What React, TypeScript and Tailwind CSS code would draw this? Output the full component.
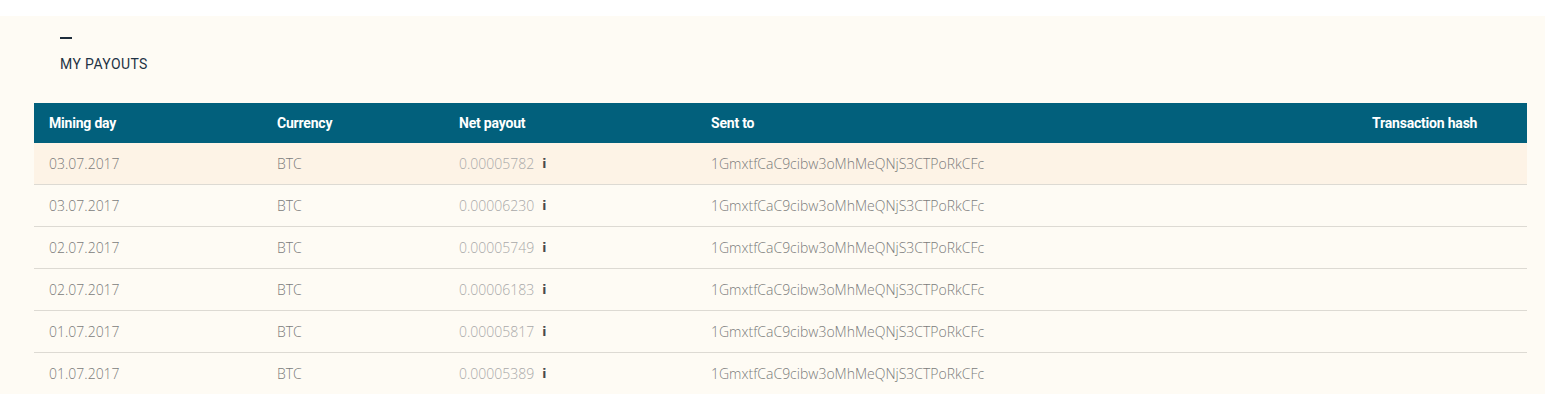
import React from "react";

interface Payout {
  day: string;
  currency: string;
  amount: string;
  address: string;
}

const payouts: Payout[] = [
  { day: "03.07.2017", currency: "BTC", amount: "0.00005782", address: "1GmxtfCaC9cibw3oMhMeQNjS3CTPoRkCFc" },
  { day: "03.07.2017", currency: "BTC", amount: "0.00006230", address: "1GmxtfCaC9cibw3oMhMeQNjS3CTPoRkCFc" },
  { day: "02.07.2017", currency: "BTC", amount: "0.00005749", address: "1GmxtfCaC9cibw3oMhMeQNjS3CTPoRkCFc" },
  { day: "02.07.2017", currency: "BTC", amount: "0.00006183", address: "1GmxtfCaC9cibw3oMhMeQNjS3CTPoRkCFc" },
  { day: "01.07.2017", currency: "BTC", amount: "0.00005817", address: "1GmxtfCaC9cibw3oMhMeQNjS3CTPoRkCFc" },
  { day: "01.07.2017", currency: "BTC", amount: "0.00005389", address: "1GmxtfCaC9cibw3oMhMeQNjS3CTPoRkCFc" },
];

const cols = "grid grid-cols-[228px_182px_252px_1fr_155px]";

const App: React.FC = () => {
  return (
    <div className="bg-white pt-4 min-h-[394px]">
      <div className="bg-[#fefbf4] pl-[34px] pr-[18px] pt-[21px]">
        <div className="pl-[26px]">
          <div className="w-3 h-[2px] bg-[#1e2d3b]" />
          <h2 className="mt-[17px] text-[14px] leading-4 text-[#1f3344] font-['Roboto',sans-serif] tracking-[0.4px]">
            MY PAYOUTS
          </h2>
        </div>

        <div className="mt-[31px]">
          <div className={`${cols} h-10 items-center bg-[#02607c] text-white text-[14px] font-bold font-['Roboto',sans-serif] tracking-[-0.2px]`}>
            <span className="pl-[15px]">Mining day</span>
            <span className="pl-[15px]">Currency</span>
            <span className="pl-[15px]">Net payout</span>
            <span className="pl-[15px]">Sent to</span>
            <span>Transaction hash</span>
          </div>

          {payouts.map((p, i) => (
            <div
              key={i}
              className={`${cols} items-center text-[14px] font-light font-['Open_Sans',sans-serif] text-[#7b7b7b] ${
                i === 0 ? "h-[41px] bg-[#fdf3e6]" : "h-[42px] border-t border-[#dddad3]"
              }`}
            >
              <span className="pl-[15px]">{p.day}</span>
              <span className="pl-[15px]">{p.currency}</span>
              <span className="pl-[15px] text-[#a9a9a9] flex items-center">
                {p.amount}
                <span className="ml-[8px] font-bold text-[#4a4a4a] font-['DejaVu_Sans',sans-serif] text-[12px]">i</span>
              </span>
              <span className="pl-[15px]">{p.address}</span>
              <span />
            </div>
          ))}
        </div>
      </div>
    </div>
  );
};

export default App;
